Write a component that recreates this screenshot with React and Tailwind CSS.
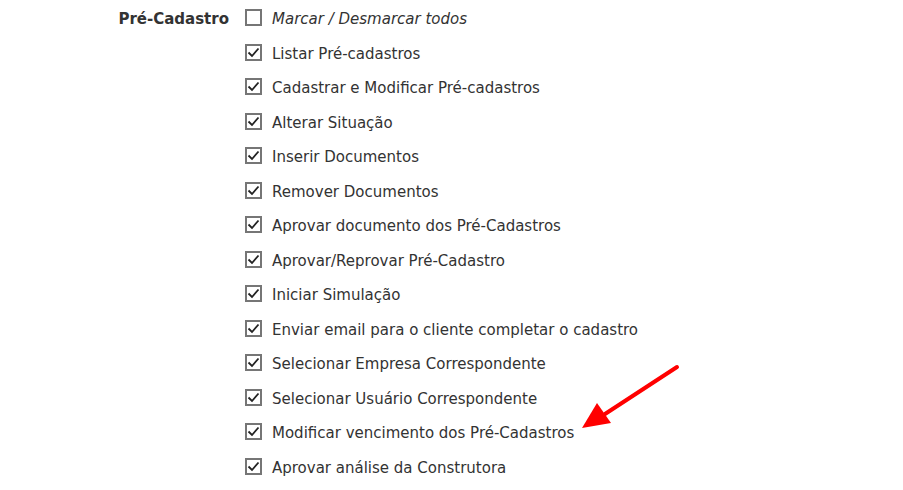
import React from "react";

const itens = [
  "Listar Pré-cadastros",
  "Cadastrar e Modificar Pré-cadastros",
  "Alterar Situação",
  "Inserir Documentos",
  "Remover Documentos",
  "Aprovar documento dos Pré-Cadastros",
  "Aprovar/Reprovar Pré-Cadastro",
  "Iniciar Simulação",
  "Enviar email para o cliente completar o cadastro",
  "Selecionar Empresa Correspondente",
  "Selecionar Usuário Correspondente",
  "Modificar vencimento dos Pré-Cadastros",
  "Aprovar análise da Construtora",
];

function Caixa({ marcado }) {
  return (
    <span className="mt-[-1px] flex h-[17px] w-[17px] shrink-0 items-center justify-center border-2 border-[#767676] bg-white">
      {marcado && (
        <svg width="13" height="13" viewBox="0 0 13 13" fill="none">
          <path d="M1.5 6.5 L5 10 L11.5 2.5" stroke="#222" strokeWidth="1.8" />
        </svg>
      )}
    </span>
  );
}

export default function App() {
  return (
    <div className="relative w-[903px] h-[490px] overflow-hidden bg-white font-['DejaVu_Sans',Verdana,sans-serif] text-[15px] text-[#333]">
      <div className="flex pt-[10px]">
        {/* TÍTULO */}
        <div className="w-[230px] pr-[1px] text-right font-bold leading-[18px] text-[#333]">
          Pré-Cadastro
        </div>

        {/* LISTA */}
        <div className="flex flex-col pl-[15px]">
          <label className="flex h-[34.5px] items-start gap-[10px]">
            <Caixa marcado={false} />
            <span className="italic leading-[18px]">Marcar / Desmarcar todos</span>
          </label>
          {itens.map((item) => (
            <label key={item} className="flex h-[34.5px] items-start gap-[10px]">
              <Caixa marcado />
              <span className="leading-[18px]">{item}</span>
            </label>
          ))}
        </div>
      </div>

      {/* SETA */}
      <svg className="absolute left-[575px] top-[360px]" width="110" height="75" viewBox="0 0 110 75">
        <path d="M102 7 L30 54" stroke="#f00" strokeWidth="4" strokeLinecap="round" />
        <path d="M7 68 L22 43 L36 63 Z" fill="#f00" />
      </svg>
    </div>
  );
}
